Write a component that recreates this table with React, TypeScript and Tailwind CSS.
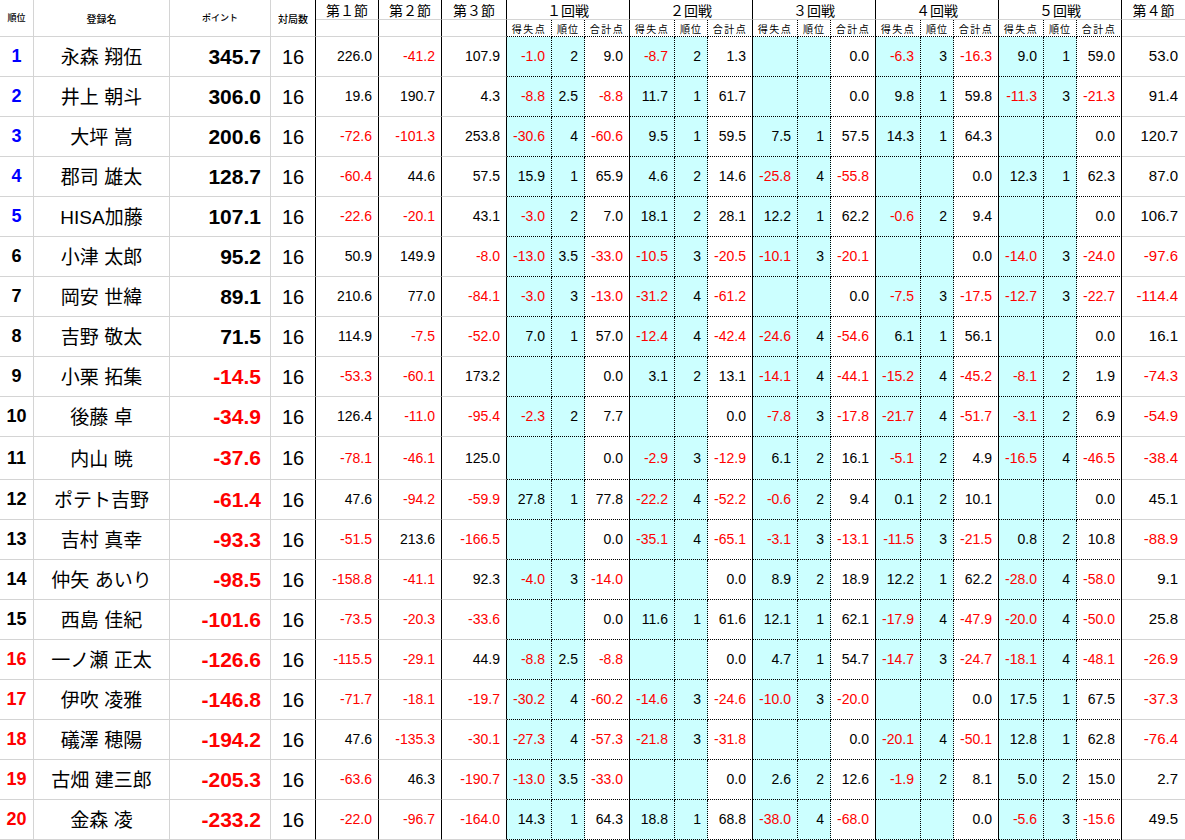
import React from "react";

type Round = [string, string, string];
type Row = { name: string; pts: string; s: [string, string, string]; r: Round[]; s4: string };

const E: Round = ["", "", "0.0"];

const rows: Row[] = [
  { name: "永森 翔伍", pts: "345.7", s: ["226.0", "-41.2", "107.9"], r: [["-1.0", "2", "9.0"], ["-8.7", "2", "1.3"], E, ["-6.3", "3", "-16.3"], ["9.0", "1", "59.0"]], s4: "53.0" },
  { name: "井上 朝斗", pts: "306.0", s: ["19.6", "190.7", "4.3"], r: [["-8.8", "2.5", "-8.8"], ["11.7", "1", "61.7"], E, ["9.8", "1", "59.8"], ["-11.3", "3", "-21.3"]], s4: "91.4" },
  { name: "大坪 嵩", pts: "200.6", s: ["-72.6", "-101.3", "253.8"], r: [["-30.6", "4", "-60.6"], ["9.5", "1", "59.5"], ["7.5", "1", "57.5"], ["14.3", "1", "64.3"], E], s4: "120.7" },
  { name: "郡司 雄太", pts: "128.7", s: ["-60.4", "44.6", "57.5"], r: [["15.9", "1", "65.9"], ["4.6", "2", "14.6"], ["-25.8", "4", "-55.8"], E, ["12.3", "1", "62.3"]], s4: "87.0" },
  { name: "HISA加藤", pts: "107.1", s: ["-22.6", "-20.1", "43.1"], r: [["-3.0", "2", "7.0"], ["18.1", "2", "28.1"], ["12.2", "1", "62.2"], ["-0.6", "2", "9.4"], E], s4: "106.7" },
  { name: "小津 太郎", pts: "95.2", s: ["50.9", "149.9", "-8.0"], r: [["-13.0", "3.5", "-33.0"], ["-10.5", "3", "-20.5"], ["-10.1", "3", "-20.1"], E, ["-14.0", "3", "-24.0"]], s4: "-97.6" },
  { name: "岡安 世緯", pts: "89.1", s: ["210.6", "77.0", "-84.1"], r: [["-3.0", "3", "-13.0"], ["-31.2", "4", "-61.2"], E, ["-7.5", "3", "-17.5"], ["-12.7", "3", "-22.7"]], s4: "-114.4" },
  { name: "吉野 敬太", pts: "71.5", s: ["114.9", "-7.5", "-52.0"], r: [["7.0", "1", "57.0"], ["-12.4", "4", "-42.4"], ["-24.6", "4", "-54.6"], ["6.1", "1", "56.1"], E], s4: "16.1" },
  { name: "小栗 拓集", pts: "-14.5", s: ["-53.3", "-60.1", "173.2"], r: [E, ["3.1", "2", "13.1"], ["-14.1", "4", "-44.1"], ["-15.2", "4", "-45.2"], ["-8.1", "2", "1.9"]], s4: "-74.3" },
  { name: "後藤 卓", pts: "-34.9", s: ["126.4", "-11.0", "-95.4"], r: [["-2.3", "2", "7.7"], E, ["-7.8", "3", "-17.8"], ["-21.7", "4", "-51.7"], ["-3.1", "2", "6.9"]], s4: "-54.9" },
  { name: "内山 暁", pts: "-37.6", s: ["-78.1", "-46.1", "125.0"], r: [E, ["-2.9", "3", "-12.9"], ["6.1", "2", "16.1"], ["-5.1", "2", "4.9"], ["-16.5", "4", "-46.5"]], s4: "-38.4" },
  { name: "ポテト吉野", pts: "-61.4", s: ["47.6", "-94.2", "-59.9"], r: [["27.8", "1", "77.8"], ["-22.2", "4", "-52.2"], ["-0.6", "2", "9.4"], ["0.1", "2", "10.1"], E], s4: "45.1" },
  { name: "吉村 真幸", pts: "-93.3", s: ["-51.5", "213.6", "-166.5"], r: [E, ["-35.1", "4", "-65.1"], ["-3.1", "3", "-13.1"], ["-11.5", "3", "-21.5"], ["0.8", "2", "10.8"]], s4: "-88.9" },
  { name: "仲矢 あいり", pts: "-98.5", s: ["-158.8", "-41.1", "92.3"], r: [["-4.0", "3", "-14.0"], E, ["8.9", "2", "18.9"], ["12.2", "1", "62.2"], ["-28.0", "4", "-58.0"]], s4: "9.1" },
  { name: "西島 佳紀", pts: "-101.6", s: ["-73.5", "-20.3", "-33.6"], r: [E, ["11.6", "1", "61.6"], ["12.1", "1", "62.1"], ["-17.9", "4", "-47.9"], ["-20.0", "4", "-50.0"]], s4: "25.8" },
  { name: "一ノ瀬 正太", pts: "-126.6", s: ["-115.5", "-29.1", "44.9"], r: [["-8.8", "2.5", "-8.8"], E, ["4.7", "1", "54.7"], ["-14.7", "3", "-24.7"], ["-18.1", "4", "-48.1"]], s4: "-26.9" },
  { name: "伊吹 凌雅", pts: "-146.8", s: ["-71.7", "-18.1", "-19.7"], r: [["-30.2", "4", "-60.2"], ["-14.6", "3", "-24.6"], ["-10.0", "3", "-20.0"], E, ["17.5", "1", "67.5"]], s4: "-37.3" },
  { name: "礒澤 穂陽", pts: "-194.2", s: ["47.6", "-135.3", "-30.1"], r: [["-27.3", "4", "-57.3"], ["-21.8", "3", "-31.8"], E, ["-20.1", "4", "-50.1"], ["12.8", "1", "62.8"]], s4: "-76.4" },
  { name: "古畑 建三郎", pts: "-205.3", s: ["-63.6", "46.3", "-190.7"], r: [["-13.0", "3.5", "-33.0"], E, ["2.6", "2", "12.6"], ["-1.9", "2", "8.1"], ["5.0", "2", "15.0"]], s4: "2.7" },
  { name: "金森 凌", pts: "-233.2", s: ["-22.0", "-96.7", "-164.0"], r: [["14.3", "1", "64.3"], ["18.8", "1", "68.8"], ["-38.0", "4", "-68.0"], E, ["-5.6", "3", "-15.6"]], s4: "49.5" },
];

const rounds = ["１回戦", "２回戦", "３回戦", "４回戦", "５回戦"];

const tone = (v: string) => (v.startsWith("-") ? "text-[#ff0000]" : "text-black");

const grid = "border-b border-b-[#d4d4d4]";
const dotB = "border-b border-b-black [border-bottom-style:dotted]";
const dotR = "border-r border-r-black [border-right-style:dotted]";

function rankColor(n: number) {
  if (n <= 5) return "text-[#0000ff]";
  if (n >= 16) return "text-[#ff0000]";
  return "text-black";
}

export default function App() {
  return (
    <div className="h-[840px] w-[1185px] overflow-hidden bg-white font-['Liberation_Sans','Noto_Sans_CJK_JP',sans-serif] text-black">
      <div className="grid grid-cols-[34px_136px_101px_45px_63px_63px_65px_45px_33px_45px_45px_33px_45px_45px_33px_45px_45px_33px_45px_45px_33px_45px_63px] grid-rows-[20px_17px_repeat(10,40px)_43px_repeat(9,40px)]">
        {/* header, first line */}
        <div className={`row-span-2 flex items-center justify-center border-r border-r-[#d4d4d4] ${grid} font-['Noto_Sans_CJK_JP',sans-serif] text-[9px] font-medium`}>順位</div>
        <div className={`row-span-2 flex items-center justify-center border-r border-r-[#d4d4d4] ${grid} font-['Noto_Sans_CJK_JP',sans-serif] text-[10px] font-medium`}>登録名</div>
        <div className={`row-span-2 flex items-center justify-center border-r border-r-[#d4d4d4] ${grid} font-['Noto_Sans_CJK_JP',sans-serif] text-[9px] font-medium`}>ポイント</div>
        <div className={`row-span-2 flex items-center justify-center border-r border-r-black ${grid} font-['Noto_Sans_CJK_JP',sans-serif] text-[10px] font-medium`}>対局数</div>
        {["第１節", "第２節", "第３節"].map((t) => (
          <div key={t} className={`flex items-center justify-center border-r border-r-black ${grid} font-['Noto_Sans_CJK_JP',sans-serif] text-[14px] leading-none`}>
            {t}
          </div>
        ))}
        {rounds.map((t) => (
          <div key={t} className={`col-span-3 flex items-center justify-center border-r border-r-black ${grid} font-['Noto_Sans_CJK_JP',sans-serif] text-[14px] leading-none`}>
            {t}
          </div>
        ))}
        <div className={`flex items-center justify-center ${grid} font-['Noto_Sans_CJK_JP',sans-serif] text-[14px] leading-none`}>第４節</div>

        {/* header, second line */}
        <div className={`border-r border-r-black ${grid}`} />
        <div className={`border-r border-r-black ${grid}`} />
        <div className={`border-r border-r-black ${grid}`} />
        {rounds.map((t) => (
          <React.Fragment key={t}>
            <div className={`flex items-center justify-center ${dotR} ${dotB} font-['Noto_Sans_CJK_JP',sans-serif] text-[10px] tracking-[1.5px]`}>得失点</div>
            <div className={`flex items-center justify-center ${dotR} ${dotB} font-['Noto_Sans_CJK_JP',sans-serif] text-[10px] tracking-[1px]`}>順位</div>
            <div className={`flex items-center justify-center border-r border-r-black ${dotB} font-['Noto_Sans_CJK_JP',sans-serif] text-[10px] tracking-[1.5px]`}>合計点</div>
          </React.Fragment>
        ))}
        <div className={grid} />

        {/* body */}
        {rows.map((row, i) => (
          <React.Fragment key={row.name}>
            <div className={`flex items-center justify-center border-r border-r-[#d4d4d4] ${grid} text-[18px] font-bold ${rankColor(i + 1)}`}>{i + 1}</div>
            <div className={`flex items-center justify-center whitespace-pre border-r border-r-[#d4d4d4] pt-[4px] ${grid} text-[19px]`}>{row.name}</div>
            <div className={`flex items-center justify-end border-r border-r-[#d4d4d4] pr-[9px] ${grid} text-[21px] font-bold ${tone(row.pts)}`}>{row.pts}</div>
            <div className={`flex items-center justify-center border-r border-r-black ${grid} text-[20px]`}>16</div>
            {row.s.map((v, k) => (
              <div key={k} className={`flex items-center justify-end border-r border-r-black pr-[6px] ${grid} text-[14px] ${tone(v)}`}>{v}</div>
            ))}
            {row.r.map(([d, rk, tot], k) => (
              <React.Fragment key={k}>
                <div className={`flex items-center justify-end bg-[#ccffff] pr-[6px] ${dotR} ${dotB} text-[14px] ${tone(d)}`}>{d}</div>
                <div className={`flex items-center justify-end bg-[#ccffff] pr-[6px] ${dotR} ${dotB} text-[14px]`}>{rk}</div>
                <div className={`flex items-center justify-end border-r border-r-black pr-[6px] ${dotB} text-[14px] ${tone(tot)}`}>{tot}</div>
              </React.Fragment>
            ))}
            <div className={`flex items-center justify-end pr-[7px] ${grid} text-[15px] ${tone(row.s4)}`}>{row.s4}</div>
          </React.Fragment>
        ))}
      </div>
    </div>
  );
}
